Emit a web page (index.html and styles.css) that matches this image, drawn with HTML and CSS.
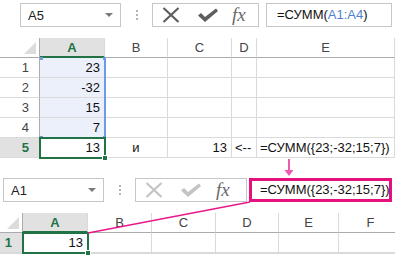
FILE: index.html
```html
<!DOCTYPE html>
<html>
<head>
<meta charset="utf-8">
<link rel="stylesheet" href="styles.css">
</head>
<body>
<section class="sheet top">
  <div class="bar">
    <div class="namebox"><span>A5</span><span class="caret"></span></div>
    <div class="dots"><i></i><i></i><i></i></div>
    <div class="btns">
      <svg class="ico-x" width="18" height="16" viewBox="0 0 18 16"><path d="M1.5 1 L16.5 15 M16.5 1 L1.5 15" stroke="currentColor" stroke-width="2.2" fill="none"/></svg>
      <svg class="ico-ok" width="22" height="16" viewBox="0 0 22 16"><path d="M1 8.5 L4 6 L8 10 L19 1.5 L21 4 L8 15 Z" fill="currentColor"/></svg>
      <span class="fx">fx</span>
    </div>
    <div class="formula">=СУММ(<span class="ref">A1:A4</span>)</div>
  </div>
  <div class="grid g-top">
    <div class="c hd corner"><span class="tri"></span></div>
    <div class="c hd sel">A</div>
    <div class="c hd">B</div>
    <div class="c hd">C</div>
    <div class="c hd">D</div>
    <div class="c hd">E</div>

    <div class="c rh">1</div><div class="c rng r">23</div><div class="c"></div><div class="c"></div><div class="c"></div><div class="c"></div>
    <div class="c rh">2</div><div class="c rng r">-32</div><div class="c"></div><div class="c"></div><div class="c"></div><div class="c"></div>
    <div class="c rh">3</div><div class="c rng r">15</div><div class="c"></div><div class="c"></div><div class="c"></div><div class="c"></div>
    <div class="c rh">4</div><div class="c rng r">7</div><div class="c"></div><div class="c"></div><div class="c"></div><div class="c"></div>
    <div class="c rh sel">5</div><div class="c r">13</div><div class="c ctr">и</div><div class="c r">13</div><div class="c">&lt;--</div><div class="c">=СУММ({23;-32;15;7})</div>

    <div class="range-edge"></div>
    <div class="knob k1"></div><div class="knob k2"></div><div class="knob k3"></div><div class="knob k4"></div>
    <div class="active a-top"><span class="handle"></span></div>
  </div>
</section>

<section class="sheet bottom">
  <div class="bar">
    <div class="namebox"><span>A1</span><span class="caret"></span></div>
    <div class="dots"><i></i><i></i><i></i></div>
    <div class="btns off">
      <svg class="ico-x" width="18" height="16" viewBox="0 0 18 16"><path d="M1.5 1 L16.5 15 M16.5 1 L1.5 15" stroke="currentColor" stroke-width="2.2" fill="none"/></svg>
      <svg class="ico-ok" width="22" height="16" viewBox="0 0 22 16"><path d="M1 8.5 L4 6 L8 10 L19 1.5 L21 4 L8 15 Z" fill="currentColor"/></svg>
      <span class="fx">fx</span>
    </div>
    <div class="formula hl">=СУММ({23;-32;15;7})</div>
  </div>
  <div class="grid g-bot">
    <div class="c hd corner"><span class="tri"></span></div>
    <div class="c hd sel">A</div>
    <div class="c hd">B</div>
    <div class="c hd">C</div>
    <div class="c hd">D</div>
    <div class="c hd">E</div>
    <div class="c hd">F</div>

    <div class="c rh sel">1</div><div class="c r">13</div><div class="c"></div><div class="c"></div><div class="c"></div><div class="c"></div><div class="c"></div>
    <div class="c rh"></div><div class="c"></div><div class="c"></div><div class="c"></div><div class="c"></div><div class="c"></div><div class="c"></div>

    <div class="active a-bot"><span class="handle"></span></div>
  </div>
</section>

<svg class="callout" width="395" height="256" viewBox="0 0 395 256">
  <line x1="289" y1="159" x2="289" y2="172" stroke="#ee5aae" stroke-width="2"/>
  <polygon points="284.5,170 293.5,170 289,176" fill="#ee5aae"/>
  <line x1="88" y1="233" x2="250" y2="202" stroke="#e8188a" stroke-width="1.5"/>
</svg>
</body>
</html>
```

FILE: styles.css
```css
* { box-sizing: border-box; margin: 0; padding: 0; }

body {
  margin: 0;
  width: 395px;
  height: 256px;
  overflow: hidden;
  background: #fff;
  position: relative;
  font-family: "Liberation Sans", Arial, sans-serif;
  font-size: 13px;
  color: #111;
}

.bar {
  display: flex;
  align-items: center;
  height: 24px;
}
.top .bar { margin: 3px 0 11px 20px; }
.bottom .bar { margin: 20px 0 11px 3px; }

.namebox {
  width: 101px;
  height: 24px;
  border: 1px solid #c6c6c6;
  display: flex;
  align-items: center;
  justify-content: space-between;
  padding: 0 7px 0 7px;
  color: #222;
}
.caret {
  width: 0;
  height: 0;
  border-left: 4px solid transparent;
  border-right: 4px solid transparent;
  border-top: 4px solid #7a7a7a;
}

.dots {
  width: 31px;
  display: flex;
  flex-direction: column;
  align-items: center;
  gap: 2px;
}
.dots i {
  display: block;
  width: 2px;
  height: 2px;
  background: #b4b4b4;
}

.btns {
  width: 107px;
  height: 24px;
  border: 1px solid #c6c6c6;
  display: flex;
  align-items: center;
  color: #5e5e5e;
}
.bottom .btns { width: 112px; }
.btns.off { color: #c3c3c3; }
.ico-x { margin-left: 9px; }
.ico-ok { margin-left: 17px; }
.fx {
  margin-left: 13px;
  font-family: "Liberation Serif", "Times New Roman", serif;
  font-style: italic;
  font-size: 19px;
  color: #6a6a6a;
  line-height: 22px;
}
.bottom .fx { margin-left: 14px; }

.formula {
  margin-left: 7px;
  width: 126px;
  height: 24px;
  border: 1px solid #c6c6c6;
  padding-left: 10px;
  line-height: 22px;
  white-space: nowrap;
  color: #111;
}
.formula .ref { color: #4f7fd0; }
.formula.hl {
  margin-left: 2px;
  width: 143px;
  border: 3px solid #e5117f;
  padding-left: 8px;
  line-height: 18px;
}

.grid {
  display: grid;
  position: relative;
}
.g-top {
  grid-template-columns: 40px 65px 63px 64px 25px 138px;
  grid-template-rows: repeat(6, 20px);
}
.g-bot {
  grid-template-columns: 23px 65px 64px 64px 63px 60px 64px;
  grid-template-rows: repeat(2, 20px);
}

.c {
  border-right: 1px solid #dadada;
  border-bottom: 1px solid #dadada;
  line-height: 19px;
  padding: 0 3px;
  white-space: nowrap;
  overflow: visible;
}
.c.r { text-align: right; padding-right: 4px; }
.c.ctr { text-align: center; }

.hd {
  text-align: center;
  color: #444;
  border-bottom-color: #ababab;
}
.hd.sel {
  background: #e1e1e1;
  color: #217346;
  font-weight: bold;
  border-bottom: 2px solid #217346;
}
.corner {
  position: relative;
  border-right-color: #ababab;
}
.tri {
  position: absolute;
  right: 3px;
  bottom: 3px;
  width: 0;
  height: 0;
  border-left: 12px solid transparent;
  border-bottom: 12px solid #dcdcdc;
}
.rh {
  text-align: right;
  padding-right: 10px;
  color: #444;
  border-right-color: #ababab;
}
.rh.sel {
  background: #e1e1e1;
  color: #217346;
  font-weight: bold;
}
.rng { background: #ebf0fb; }

.range-edge {
  position: absolute;
  left: 104px;
  top: 20px;
  width: 2px;
  height: 79px;
  background: #6d9ae6;
}
.knob {
  position: absolute;
  width: 3px;
  height: 3px;
  background: #6d9ae6;
}
.k1 { left: 40px; top: 19px; }
.k2 { left: 103px; top: 19px; }
.k3 { left: 40px; top: 98px; }
.k4 { left: 103px; top: 98px; }

.active {
  position: absolute;
  border: 2px solid #217346;
}
.a-top { left: 39px; top: 99px; width: 67px; height: 22px; }
.a-bot { left: 22px; top: 19px; width: 67px; height: 22px; }
.handle {
  position: absolute;
  right: -4px;
  bottom: -4px;
  width: 6px;
  height: 6px;
  background: #217346;
  border: 1px solid #fff;
}

.callout {
  position: absolute;
  left: 0;
  top: 0;
  pointer-events: none;
}
```
